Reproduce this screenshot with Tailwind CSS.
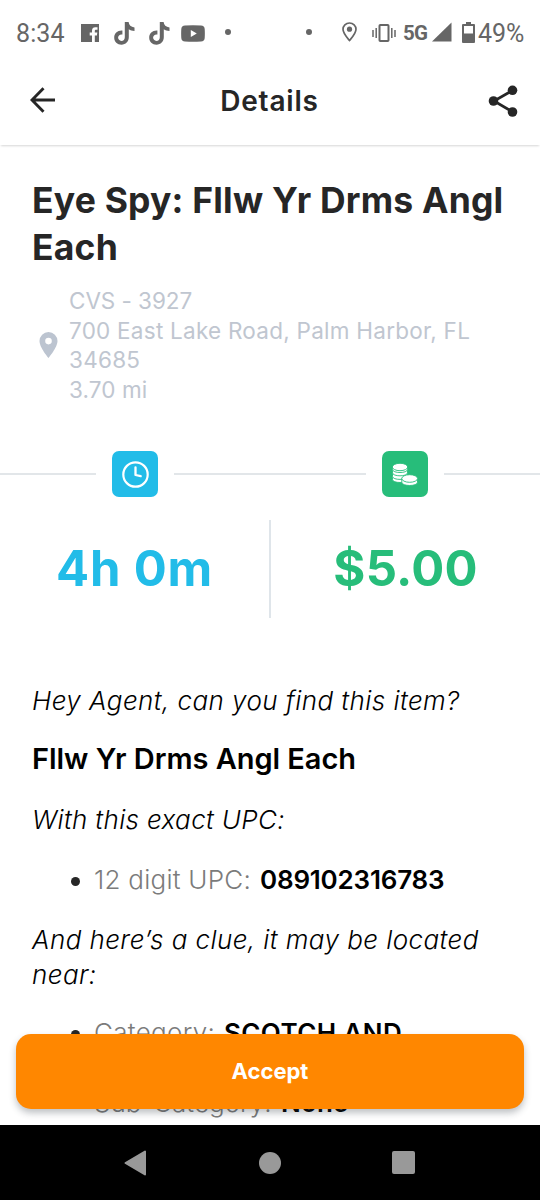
<!DOCTYPE html>
<html lang="en">
<head>
<meta charset="utf-8">
<title>Details</title>
<script src="https://cdn.jsdelivr.net/npm/@tailwindcss/browser@4"></script>
</head>
<body class="bg-white font-['Inter',sans-serif] text-[#262626]">
<div class="relative flex h-[1200px] w-[540px] flex-col overflow-hidden bg-white">

  <!-- Status bar -->
  <div class="flex h-[66px] shrink-0 items-center pl-4 font-['Roboto',sans-serif] text-[25px] text-[#666]">
    <span class="w-[65px] pt-[2px] tracking-[0.1px]">8:34</span>
    <svg class="size-[18px] shrink-0" viewBox="0 0 18 18"><path fill="#666" fill-rule="evenodd" d="M0 0h18v18h-4.200v-6.600h2.100l.4-2.800h-2.500V7c0-.8.4-1.300 1.300-1.300h1.400V3.200h-2.200c-2 0-3.300 1.200-3.300 3.300v2.100H8.700v2.800h2.300V18H0z"/></svg>
    <svg class="ml-[15px] h-[23px] w-[21px] shrink-0" viewBox="0 0 21 23"><path fill="#666" d="M10.800 0h3.800c.3 2.900 2.300 5 5.900 5.400V9c-2.200 0-4.200-.7-5.700-1.700v8c0 4.400-3.200 7.400-7.300 7.400C3.300 22.700.2 19.700.2 15.700c0-4.500 3.500-7.500 8.200-7.100v3.900c-2.500-.5-4.300 1-4.300 3.100 0 1.900 1.400 3.300 3.300 3.300 2.100 0 3.400-1.400 3.400-3.700z"/></svg>
    <svg class="ml-[14px] h-[23px] w-[21px] shrink-0" viewBox="0 0 21 23"><path fill="#666" d="M10.800 0h3.800c.3 2.900 2.300 5 5.900 5.400V9c-2.200 0-4.200-.7-5.700-1.700v8c0 4.400-3.200 7.400-7.300 7.400C3.300 22.700.2 19.700.2 15.700c0-4.500 3.500-7.500 8.200-7.100v3.900c-2.500-.5-4.300 1-4.300 3.100 0 1.900 1.400 3.300 3.300 3.300 2.100 0 3.400-1.400 3.400-3.700z"/></svg>
    <svg class="ml-[11px] h-[17px] w-6 shrink-0" viewBox="0 0 24 17"><path fill="#666" fill-rule="evenodd" d="M4 .4Q12-.1 20 .4q3.500.2 3.700 3.600.3 4.500 0 9-.2 3.400-3.700 3.600-8 .5-16 0Q.5 16.400.3 13q-.3-4.500 0-9Q.5.600 4 .4zM9.800 5v7l6-3.500z"/></svg>
    <span class="mb-[2px] ml-5 size-[6px] shrink-0 rounded-full bg-[#666]"></span>
    <span class="mb-[2px] ml-[75px] size-[6px] shrink-0 rounded-full bg-[#666]"></span>
    <svg class="mb-[2px] ml-[30px] h-5 w-[15px] shrink-0" viewBox="0 0 15 20"><path d="M7.500 1C3.800 1 1 3.800 1 7.300c0 4.100 4.500 8.800 6.500 11.200C9.500 16.100 14 11.400 14 7.300 14 3.800 11.200 1 7.500 1z" fill="none" stroke="#666" stroke-width="1.700"/><circle cx="7.500" cy="7.200" r="2.600" fill="#666"/></svg>
    <svg class="mb-[1px] ml-[15px] h-[18px] w-[24px] shrink-0" viewBox="0 0 24 18"><rect x="7.500" y="1" width="9" height="16" rx=".8" fill="none" stroke="#666" stroke-width="2"/><path d="M1 6v7M4.200 4v10M19.800 4v10M23 6v7" stroke="#666" stroke-width="1.500"/></svg>
    <span class="ml-[7px] w-[29px] text-[20.5px] font-bold tracking-[-0.7px]">5G</span>
    <svg class="mb-[2px] size-5 shrink-0" viewBox="0 0 20 20"><path d="M19.500.5v19H0z" fill="#666"/></svg>
    <svg class="mb-[1px] ml-[10px] h-[21px] w-[13px] shrink-0" viewBox="0 0 13 21"><path fill="#666" fill-rule="evenodd" d="M4 0h5v2h3a1 1 0 0 1 1 1v17a1 1 0 0 1-1 1H1a1 1 0 0 1-1-1V3a1 1 0 0 1 1-1h3zM2 4v7.500h9V4z"/></svg>
    <span class="ml-[3px] pt-[2px]">49%</span>
  </div>

  <!-- App bar -->
  <header class="flex h-[79px] shrink-0 items-center justify-between pr-[22px] pl-[30px] pb-[12px] shadow-[0_2px_2px_-1px_rgba(0,0,0,0.16)]">
    <svg class="h-[26px] w-[26px]" viewBox="0 0 26 26" fill="none" stroke="#262626" stroke-width="2.900"><path d="M25 13H2.500M13.500 1.300 2 13l11.500 11.700"/></svg>
    <h1 class="mt-[2px] mr-[5px] text-[28px] leading-8 font-semibold tracking-[0.8px]">Details</h1>
    <svg class="mt-[2px] h-8 w-[30px]" viewBox="0 0 30 32"><path d="M24.500 5.500 6 16l18.500 10.800" fill="none" stroke="#262626" stroke-width="2.700"/><g fill="#262626"><circle cx="24.500" cy="5.300" r="4.800"/><circle cx="5.500" cy="16" r="4.800"/><circle cx="24.500" cy="27" r="4.800"/></g></svg>
  </header>

  <main class="flex flex-col pt-[32px]">
    <h2 class="pl-8 text-[35.5px] leading-[47px] font-bold tracking-[0.2px] whitespace-nowrap">Eye Spy: Fllw Yr Drms Angl<br>Each</h2>

    <div class="mt-[15px] flex items-center pl-[39px] text-[#c0c6d0]">
      <svg class="h-[26px] w-[19px]" viewBox="0 0 18 26"><path fill="#bcc4d0" fill-rule="evenodd" d="M9 0a9 9 0 0 0-9 9c0 6.500 9 17 9 17s9-10.500 9-17a9 9 0 0 0-9-9zm0 5.800a3.300 3.300 0 1 1 0 6.600 3.300 3.300 0 0 1 0-6.600z"/></svg>
      <p class="ml-[11px] text-[22.5px] leading-[29.5px] font-normal tracking-[0.25px] whitespace-nowrap"><span class="tracking-[-0.05px]">CVS - 3927</span><br>700 East Lake Road, Palm Harbor, FL<br>34685<br><span class="tracking-[0.1px]">3.70 mi</span></p>
    </div>

    <!-- Time and pay -->
    <section class="mt-[47px]">
      <div class="flex items-center">
        <span class="h-[2px] w-24 bg-[#e2e6e9]"></span>
        <span class="mx-4 flex size-[46px] items-center justify-center rounded-[7px] bg-[#22bce8]">
          <svg class="size-[27px]" viewBox="0 0 27 27" fill="none" stroke="#fff" stroke-linecap="round" stroke-linejoin="round"><circle cx="13.500" cy="13.500" r="12.200" stroke-width="2.200"/><path d="M13.500 6.500v7.500l5.200 1.200" stroke-width="2.300"/></svg>
        </span>
        <span class="h-[2px] w-48 bg-[#e2e6e9]"></span>
        <span class="mx-4 flex size-[46px] items-center justify-center rounded-[7px] bg-[#27bd7a]">
          <svg class="h-[23px] w-[26px]" viewBox="0 0 26 23"><g fill="#fff" stroke="#27bd7a" stroke-width=".9"><path d="M.5 13.500v3c0 4 15 4 15 0v-3z"/><path d="M.5 10v3.400c0 4 15 4 15 0V10z"/><path d="M.5 6v3.800c0 4 15 4 15 0V6z"/><path d="M.5 3.500v3c0 4 15 4 15 0v-3z"/><ellipse cx="8" cy="4" rx="7.700" ry="3.700"/><path d="M9.800 15.500v3.700c0 4.400 15.700 4.400 15.700 0v-3.700z"/><ellipse cx="17.650" cy="15.500" rx="7.900" ry="3.800"/></g></svg>
        </span>
        <span class="h-[2px] w-24 bg-[#e2e6e9]"></span>
      </div>
      <div class="mt-[23px] flex h-[98px] items-center text-center text-[49px] leading-[48px] font-bold">
        <div class="w-[269px] tracking-[0.8px] text-[#22bce8]">4h 0m</div>
        <div class="h-full w-[2px] bg-[#dfe5ea]"></div>
        <div class="w-[269px] tracking-[0.2px] text-[#27bd7a]">$5.00</div>
      </div>
    </section>

    <!-- Instructions -->
    <section class="mt-[65px] pl-8 text-[26px] leading-[35px] font-light whitespace-nowrap text-black">
      <p class="tracking-[0.43px] italic">Hey Agent, can you find this item?</p>
      <p class="mt-[23px] text-[29px] font-semibold tracking-[-0.05px]">Fllw Yr Drms Angl Each</p>
      <p class="mt-[26px] tracking-[0.35px] italic">With this exact UPC:</p>
      <div class="mt-[25px] flex items-center pl-[39px]">
        <span class="mt-[4px] mr-[14px] size-[9px] rounded-full bg-[#262626]"></span>
        <span class="w-[166px] tracking-[0.25px] text-[#7b7b7b]">12 digit UPC:</span>
        <span class="font-semibold tracking-[-0.2px]">089102316783</span>
      </div>
      <p class="mt-[25px] tracking-[0.42px] italic">And here’s a clue, it may be located<br>near:</p>
      <div class="mt-[23px] flex items-center pl-[39px]">
        <span class="mt-[4px] mr-[14px] size-[9px] rounded-full bg-[#262626]"></span>
        <span class="w-[130px] tracking-[0.3px] text-[#7b7b7b]">Category:</span>
        <span class="font-semibold tracking-[0.4px]">SCOTCH AND</span>
      </div>
      <div class="mt-[35px] flex items-center pl-[39px]">
        <span class="mt-[4px] mr-[14px] size-[9px] rounded-full bg-[#262626]"></span>
        <span class="w-[187px] text-[#7b7b7b]">Sub-Category:</span>
        <span class="font-semibold tracking-[0.2px]">None</span>
      </div>
    </section>
  </main>

  <!-- Floating action and system navigation -->
  <div class="absolute inset-x-0 bottom-0">
    <div class="px-4 pb-4">
      <button class="block h-[75px] w-full rounded-[15px] bg-[#ff8700] text-[22px] font-bold text-white shadow-[0_4px_7px_rgba(40,50,60,0.3)]">Accept</button>
    </div>
    <nav class="flex h-[75px] items-center bg-black pl-[124px]">
      <svg class="h-[26px] w-[22px]" viewBox="0 0 22 26"><path d="M1.500 13 21 1.500v23z" fill="#999" stroke="#999" stroke-width="2" stroke-linejoin="round"/></svg>
      <span class="ml-[113px] size-[22px] rounded-full bg-[#999]"></span>
      <span class="ml-[111px] size-[23px] rounded-[2px] bg-[#999]"></span>
    </nav>
  </div>
</div>
</body>
</html>
